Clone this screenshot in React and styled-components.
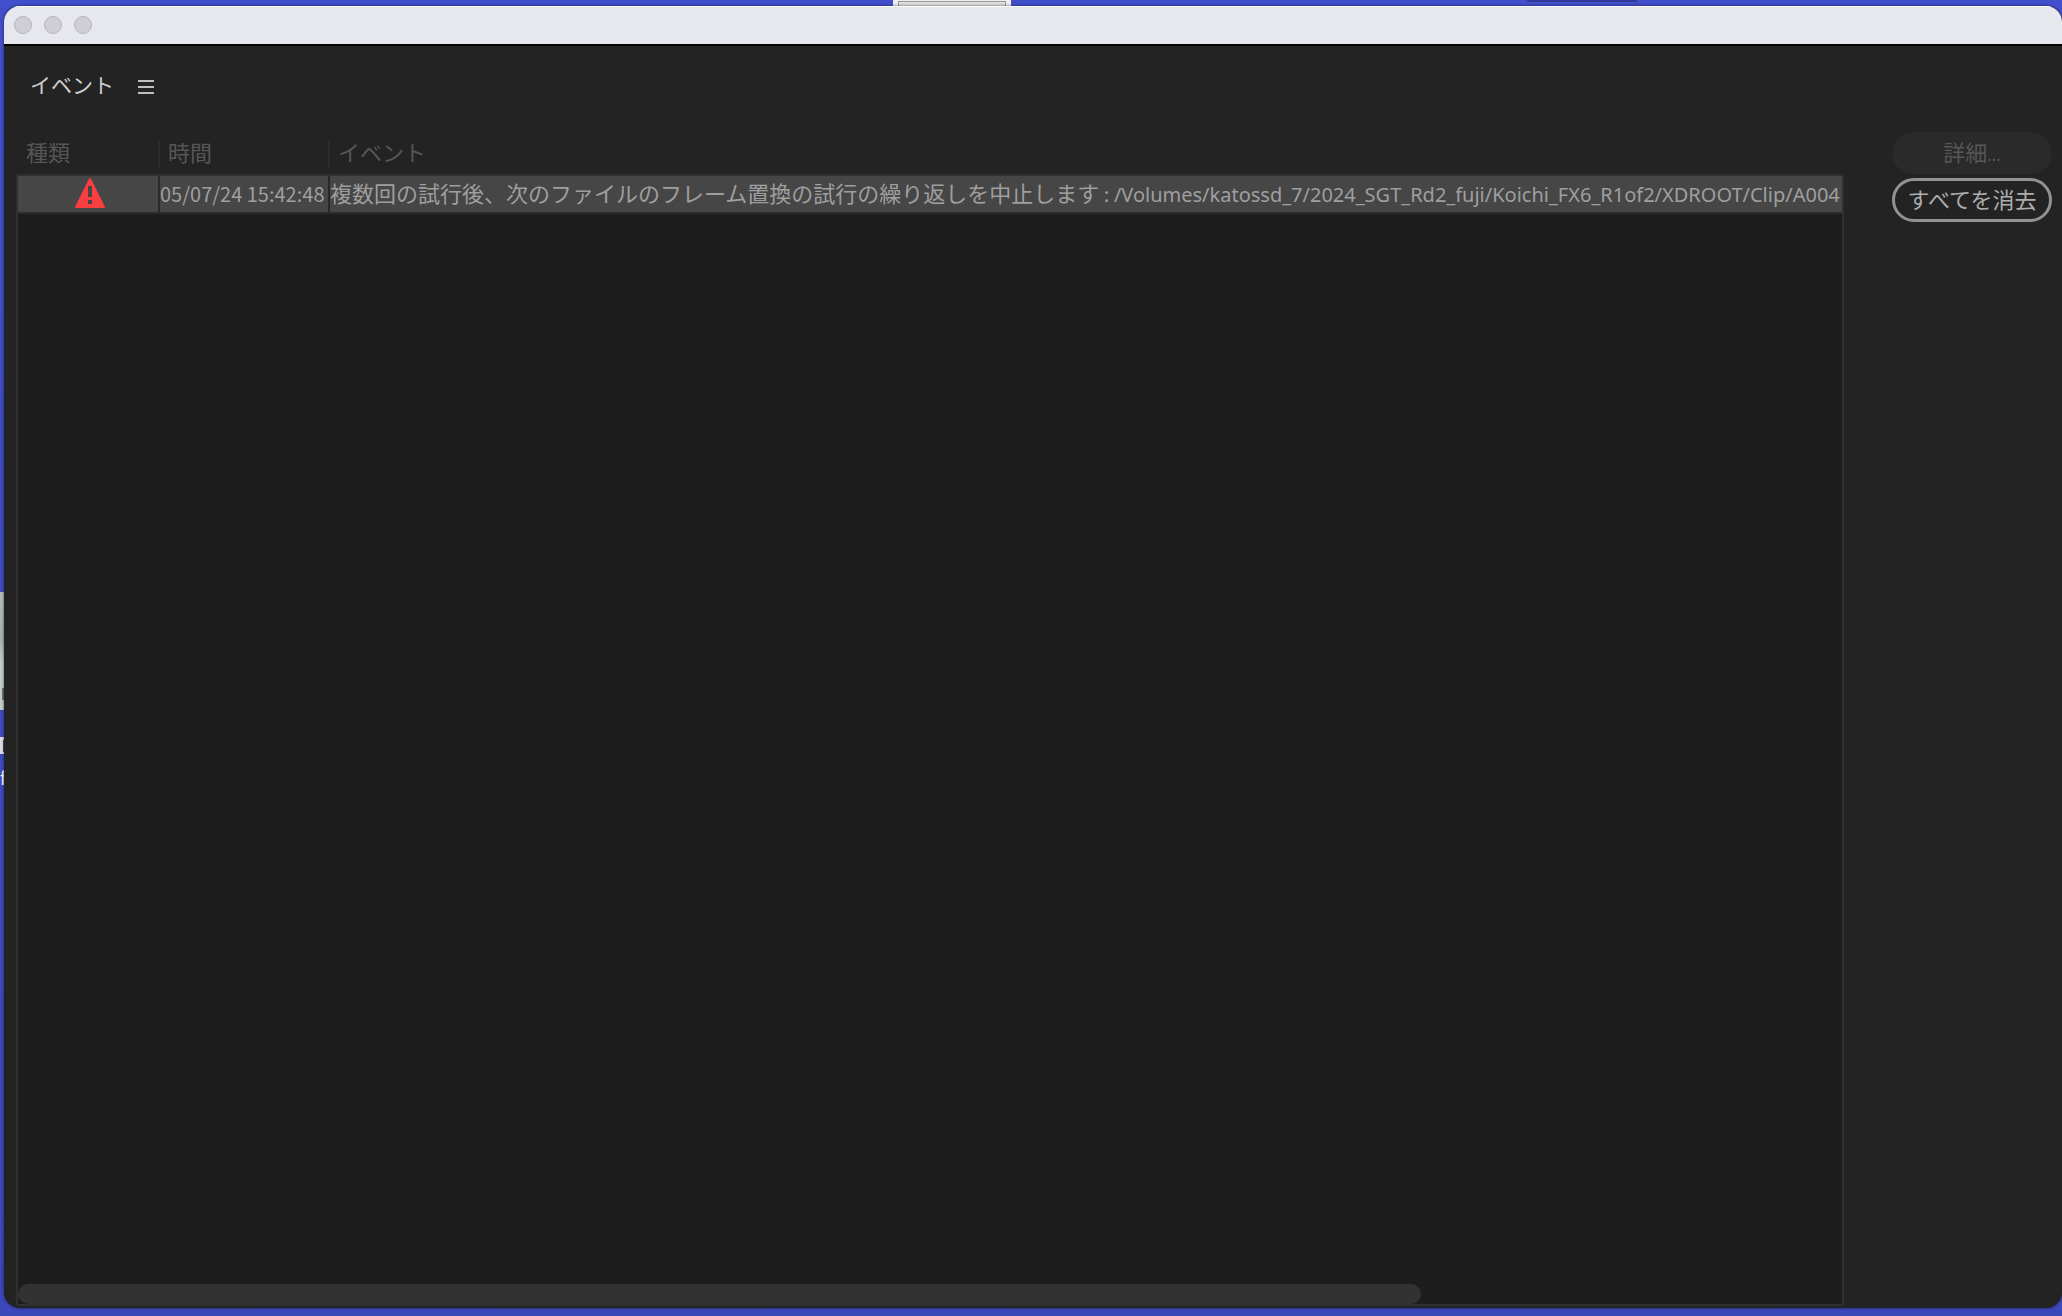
import React from "react";
import styled, { createGlobalStyle } from "styled-components";

const GlobalStyle = createGlobalStyle`
  * {
    box-sizing: border-box;
  }
  body {
    margin: 0;
    background: #3f4bc8;
    font-family: "Noto Sans CJK JP", sans-serif;
    overflow: hidden;
  }
`;

const Desktop = styled.div`
  position: relative;
  height: 100vh;
  padding: 6px 0 8px 4px;
  background: linear-gradient(#414fcb, #3b48b9);
`;

/* things lying on the desktop, mostly hidden behind the window */
const DesktopItem = styled.div`
  position: absolute;
  left: ${(p) => p.$x}px;
  top: ${(p) => p.$y}px;
  width: ${(p) => p.$w}px;
  height: ${(p) => p.$h}px;
  background: ${(p) => p.$bg || "none"};
  color: #fff;
  font-size: 18px;
  line-height: 16px;
`;

const Sheet = styled.div`
  height: 7px;
  margin: 1px 5px 0;
  border: 1px solid #999;
  background: #dedede;
`;

const Window = styled.main`
  position: relative;
  display: flex;
  flex-direction: column;
  height: 100%;
  border-radius: 16px;
  overflow: hidden;
  background: #232323;
  box-shadow: 0 0 3px rgba(0, 0, 0, 0.6);
`;

const TitleBar = styled.header`
  display: flex;
  align-items: center;
  gap: 12px;
  height: 40px;
  flex: none;
  padding: 0 0 1px 10px;
  background: #e7e8ed;
  border-top: 1px solid #fafaff;
  border-bottom: 2px solid #000;
`;

const WindowButton = styled.button`
  width: 18px;
  height: 18px;
  padding: 0;
  border: 1px solid #b5b4bd;
  border-radius: 50%;
  background: #cfced7;
`;

const PanelHead = styled.div`
  display: flex;
  align-items: center;
  gap: 24px;
  height: 80px;
  flex: none;
  padding-left: 26px;
`;

const PanelTitle = styled.h1`
  margin: 0;
  padding-bottom: 4px;
  color: #d0d0d0;
  font-size: 21px;
  line-height: 32px;
  font-weight: 400;
`;

const MenuButton = styled.button`
  display: flex;
  padding: 2px 0 0;
  border: none;
  background: none;
`;

const Content = styled.div`
  display: flex;
  gap: 48px;
  flex: 1;
  min-height: 0;
  padding: 6px 10px 2px 12px;
`;

const ListPane = styled.section`
  display: flex;
  flex-direction: column;
  flex: 1;
  min-width: 0;
  padding-top: 6px;
`;

const Table = styled.table`
  display: flex;
  flex-direction: column;
  flex: 1;
  min-height: 0;
`;

const Head = styled.thead`
  display: block;
  padding: 2px 2px 6px;
`;

const Body = styled.tbody`
  display: block;
  flex: 1;
  border: 2px solid #303030;
  border-bottom: none;
  border-radius: 3px 3px 0 0;
  background: #1d1d1d;
`;

const Row = styled.tr`
  display: grid;
  grid-template-columns: 142px 170px 1fr;
`;

const EventRow = styled(Row)`
  height: 38px;
  background: #464646;
  border-bottom: 2px solid #2c2c2c;
`;

const HeadCell = styled.th`
  height: 28px;
  padding: 0 8px;
  border-right: 2px solid #2b2b2b;
  color: #565656;
  font-size: 22px;
  line-height: 22px;
  font-weight: 400;
  text-align: left;

  &:last-child {
    border-right: none;
  }
`;

const Cell = styled.td`
  display: flex;
  align-items: center;
  justify-content: flex-start;
  min-width: 0;
  height: 36px;
  padding: 0;
  border-right: ${(p) => (p.$last ? "none" : "2px solid #292929")};
  color: #9f9f9f;
  font-size: 20px;
  line-height: 36px;
  white-space: pre;
  overflow: hidden;
`;

const IconCell = styled(Cell)`
  justify-content: center;
  padding: 0 0 2px 4px;
`;

const Message = styled.span`
  padding-bottom: 5px;
  font-size: 22px;
`;

const Path = styled.span`
  padding-top: 2px;
  font-family: "Noto Sans", sans-serif;
`;

const ScrollTrack = styled.div`
  height: 22px;
  flex: none;
  border: 2px solid #303030;
  border-top: none;
  border-radius: 0 0 3px 3px;
  background: #1d1d1d;
`;

const ScrollThumb = styled.div`
  height: 20px;
  border-radius: 10px;
  background: #323232;
`;

const Actions = styled.aside`
  display: flex;
  flex-direction: column;
  gap: 4px;
  width: 160px;
  flex: none;
`;

const ActionButton = styled.button`
  height: ${(p) => (p.disabled ? 42 : 44)}px;
  padding: 0 0 ${(p) => (p.disabled ? 2 : 5)}px;
  border: ${(p) => (p.disabled ? "none" : "3px solid #929292")};
  border-radius: 22px;
  background: ${(p) => (p.disabled ? "#2a2a2a" : "transparent")};
  color: ${(p) => (p.disabled ? "#575757" : "#adadad")};
  font-family: inherit;
  font-size: 22px;
  line-height: 32px;
  white-space: nowrap;
`;

const Dots = styled.span`
  font-size: 16px;
`;

const MenuIcon = () => (
  <svg width="16" height="14" fill="#c0c0c0">
    <path d="M0 0h16v2H0zM0 6h16v2H0zM0 12h16v2H0z" />
  </svg>
);

const WarningIcon = () => (
  <svg width="30" height="30" viewBox="0 0 30 30" role="img" aria-label="警告">
    <path
      d="M14 .8Q15-.6 16 .8L29.8 28.4Q30.3 30 28.8 30H1.2Q-.3 30 .2 28.4Z"
      fill="#f83e3e"
    />
    <path d="M13 8h4v11h-4zM13 22h4v4h-4z" fill="#464646" />
  </svg>
);

const events = [
  {
    id: 1,
    time: "05/07/24 15:42:48",
    text: "複数回の試行後、次のファイルのフレーム置換の試行の繰り返しを中止します",
    path: "/Volumes/katossd_7/2024_SGT_Rd2_fuji/Koichi_FX6_R1of2/XDROOT/Clip/A004",
  },
];

const visibleRatio = 0.769;

const App = () => {
  return (
    <Desktop>
      <GlobalStyle />
      <DesktopItem $x={893} $y={0} $w={118} $h={8} $bg="#eeeeee">
        <Sheet />
      </DesktopItem>
      <DesktopItem $x={1527} $y={0} $w={110} $h={2} $bg="#303b9c" />
      <DesktopItem
        $x={0}
        $y={592}
        $w={8}
        $h={118}
        $bg="linear-gradient(#b4bcbc, #a8b2b2 40%, #c3cccb 60%, #c3cccb)"
      />
      <DesktopItem $x={2} $y={688} $w={6} $h={12} $bg="#6c7273" />
      <DesktopItem $x={0} $y={737} $w={8} $h={17} $bg="#dcdde2" />
      <DesktopItem $x={3} $y={740} $w={4} $h={12} $bg="#4a4a55" />
      <DesktopItem $x={0} $y={769} $w={8} $h={20}>
        f
      </DesktopItem>
      <Window>
        <TitleBar>
          <WindowButton aria-label="閉じる" />
          <WindowButton aria-label="最小化" />
          <WindowButton aria-label="拡大" />
        </TitleBar>
        <PanelHead>
          <PanelTitle>イベント</PanelTitle>
          <MenuButton aria-label="パネルメニュー">
            <MenuIcon />
          </MenuButton>
        </PanelHead>
        <Content>
          <ListPane>
            <Table>
              <Head>
                <Row>
                  <HeadCell>種類</HeadCell>
                  <HeadCell>時間</HeadCell>
                  <HeadCell>イベント</HeadCell>
                </Row>
              </Head>
              <Body>
                {events.map((event) => (
                  <EventRow key={event.id}>
                    <IconCell>
                      <WarningIcon />
                    </IconCell>
                    <Cell>{event.time}</Cell>
                    <Cell $last>
                      <Message>{event.text}</Message>
                      {" : "}
                      <Path>{event.path}</Path>
                    </Cell>
                  </EventRow>
                ))}
              </Body>
            </Table>
            <ScrollTrack>
              <ScrollThumb style={{ width: `${visibleRatio * 100}%` }} />
            </ScrollTrack>
          </ListPane>
          <Actions>
            <ActionButton disabled>
              詳細<Dots>...</Dots>
            </ActionButton>
            <ActionButton>すべてを消去</ActionButton>
          </Actions>
        </Content>
      </Window>
    </Desktop>
  );
};

export default App;
